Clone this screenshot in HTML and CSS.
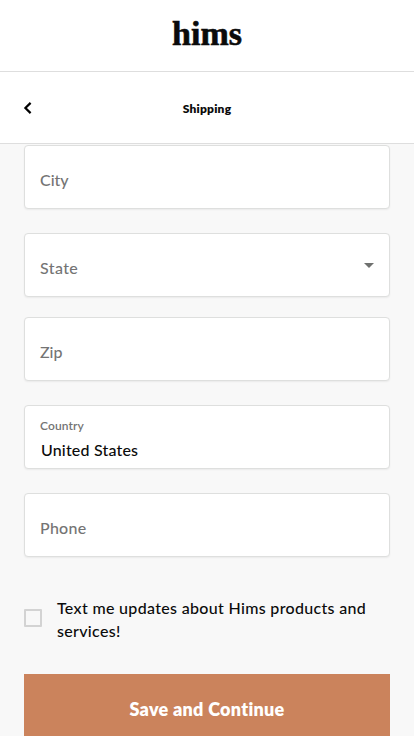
FILE: index.html
```html
<!DOCTYPE html>
<html lang="en">
<head>
<meta charset="utf-8">
<meta name="viewport" content="width=device-width, initial-scale=1">
<title>Shipping</title>
<link rel="stylesheet" href="styles.css">
</head>
<body>
<header class="brand"><span class="logo">hims</span></header>
<nav class="step">
  <svg class="back" width="10" height="14" viewBox="0 0 10 14"><path d="M8.6 1.9 3.4 7l5.2 5.1" fill="none" stroke="#000" stroke-width="2.2"/></svg>
  <h1 class="title">Shipping</h1>
</nav>
<main class="form">
  <div class="field"><span class="label">City</span></div>
  <div class="field field-select"><span class="label label-state">State</span>
    <svg class="caret" width="10" height="5" viewBox="0 0 10 5"><path d="M0 0h10L5 5z" fill="#6f716f"/></svg></div>
  <div class="field"><span class="label">Zip</span></div>
  <div class="field field-filled"><span class="small">Country</span><span class="value">United States</span></div>
  <div class="field"><span class="label label-phone">Phone</span></div>
  <label class="consent"><span class="box"></span><span class="consent-text">Text me updates about Hims products and<br>services!</span></label>
  <button class="save">Save and Continue</button>
</main>
</body>
</html>
```
FILE: styles.css
```css
* { box-sizing: border-box; }
body {
  margin: 0;
  height: 736px;
  overflow: hidden;
  background: #f8f8f8;
  color: #0b0b0b;
  font-family: Lato, "Open Sans", sans-serif;
  font-weight: 500;
}
.brand {
  height: 72px;
  padding-top: 14px;
  background: #fff;
  border-bottom: 1px solid #dedede;
  text-align: center;
}
.logo {
  display: block;
  font: bold 34px/40px "Liberation Serif", serif;
  -webkit-text-stroke: 0.6px #0b0b0b;
}
.step {
  display: grid;
  grid-template-columns: 24px 1fr 24px;
  align-items: center;
  height: 72px;
  padding: 0 22px;
  background: #fff;
  border-bottom: 1px solid #dedede;
}
.title {
  margin: 2px 0 0;
  font-size: 12px;
  line-height: 16px;
  font-weight: 800;
  letter-spacing: 0.22px;
  text-align: center;
}
.form { padding: 1px 24px 0; }
.field {
  display: flex;
  align-items: center;
  height: 64px;
  margin-bottom: 24px;
  padding: 6px 15px 0;
  background: #fff;
  border: 1px solid #dedfde;
  border-radius: 4px;
  box-shadow: 0 1px 2px rgba(0, 0, 0, 0.06);
}
.field-select { justify-content: space-between; margin-bottom: 20px; }
.caret { margin-top: -6px; }
.label { color: #747474; font-size: 16px; line-height: 24px; }
.label-state { letter-spacing: 0.4px; }
.label-phone { letter-spacing: 0.25px; }
.field-filled {
  flex-direction: column;
  align-items: flex-start;
  padding-top: 12px;
}
.small { color: #747474; font-size: 12px; line-height: 16px; font-weight: 600; letter-spacing: 0.1px; }
.value { margin: 4px 0 0 1px; font-size: 16px; line-height: 24px; letter-spacing: 0.18px; }
.consent {
  display: flex;
  align-items: center;
  margin-top: 40px;
  gap: 15px;
}
.box { flex: none; width: 18px; height: 18px; margin-top: -3px; border: 2px solid #d3d3d3; border-radius: 1px; }
.consent-text { margin-top: -1px; font-size: 16px; line-height: 23px; letter-spacing: 0.32px; white-space: nowrap; }
.save {
  display: block;
  width: 100%;
  height: 70px;
  margin-top: 32px;
  padding: 0;
  border: 0;
  background: #cb835c;
  color: #fff;
  font: 800 18px/24px Lato, sans-serif;
  letter-spacing: 0.28px;
}
```
